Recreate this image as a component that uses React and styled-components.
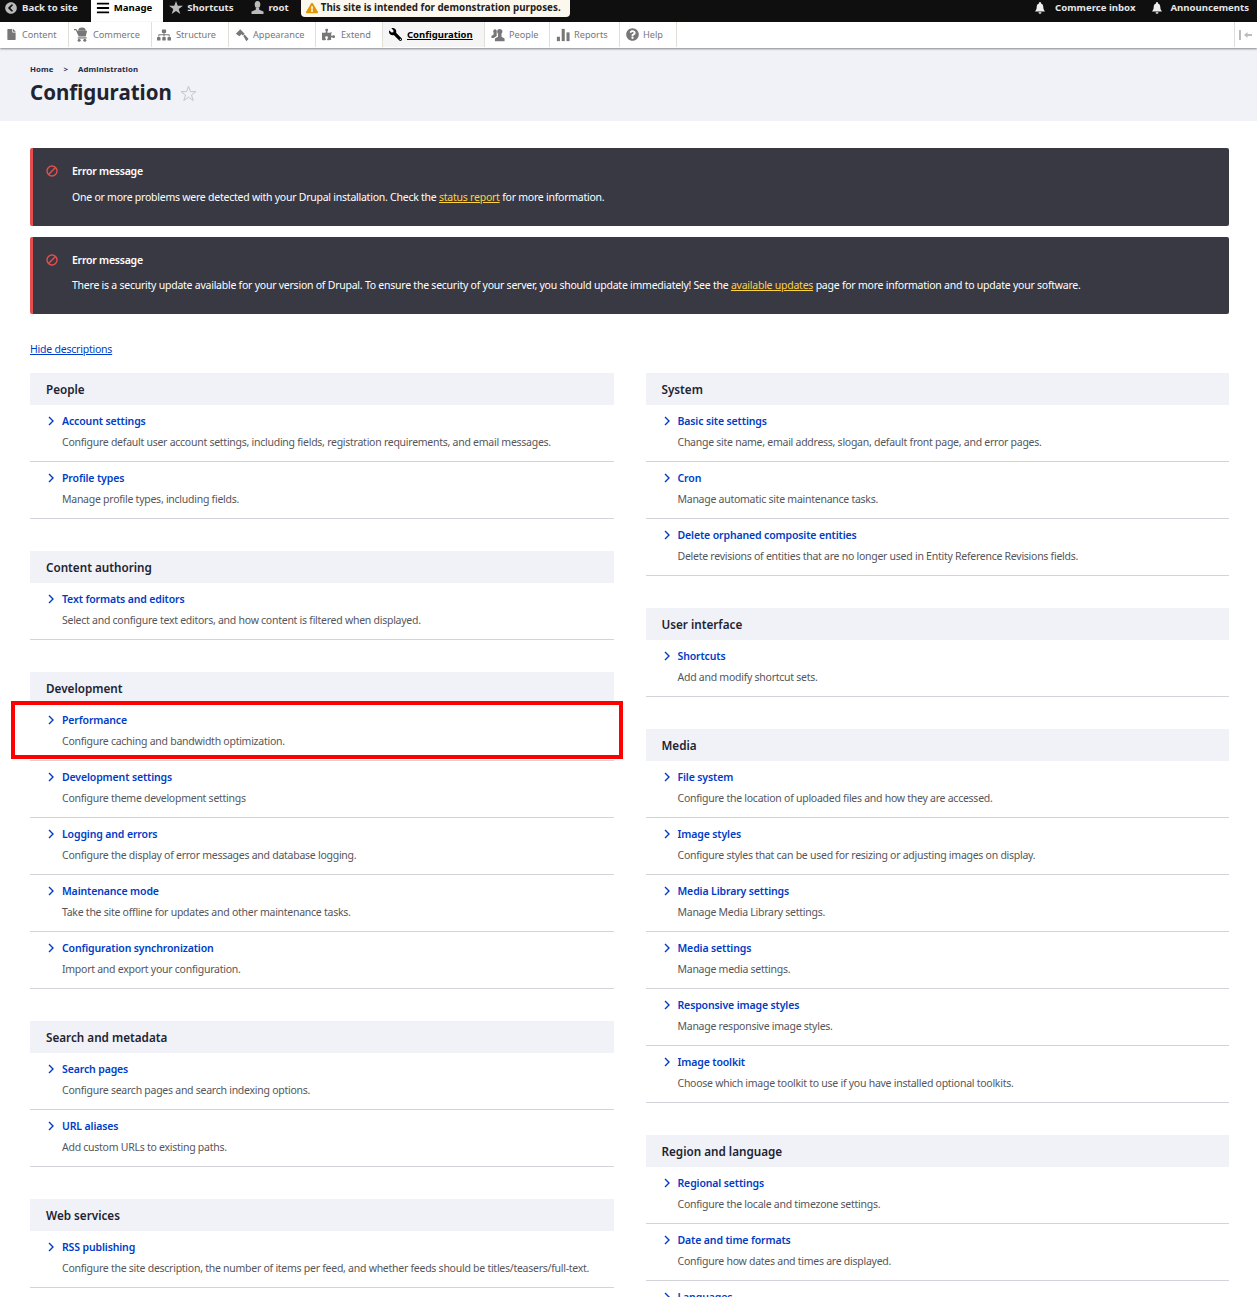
import React from 'react';
import styled, { createGlobalStyle } from 'styled-components';
import {
  FaChevronCircleLeft, FaBars, FaFile, FaSitemap,
  FaPuzzlePiece, FaWrench, FaQuestionCircle, FaExclamationTriangle
} from 'react-icons/fa';

const GlobalStyle = createGlobalStyle`
  html, body {
    margin: 0;
    padding: 0;
    background: #fff;
  }
  body {
    font-family: "Noto Sans", "Open Sans", sans-serif;
    font-size: 12px;
    color: #222330;
  }
  a { text-decoration: none; }
`;

const Page = styled.div`
  position: relative;
  width: 1257px;
  height: 1297px;
  overflow: hidden;
`;

const TopBar = styled.div`
  display: flex;
  align-items: flex-start;
  height: 22px;
  background: #0f0f0f;
  color: #eee;
  font-size: 9.6px;
  font-weight: 700;
`;
const TopItem = styled.a`
  display: flex;
  align-items: center;
  gap: ${p => p.$gap || 5}px;
  height: ${p => (p.$active ? 22 : 15)}px;
  padding: 0 ${p => p.$pad || 11}px ${p => (p.$active ? 7 : 0)}px ${p => p.$left || 6}px;
  box-sizing: border-box;
  color: ${p => (p.$active ? '#000' : '#e6e6e6')};
  background: ${p => (p.$active ? '#fff' : 'none')};
  svg { flex: none; }
`;
const DemoNotice = styled.div`
  display: flex;
  align-items: center;
  gap: 3px;
  width: 269px;
  height: 17px;
  box-sizing: border-box;
  padding: 0 0 2px 5px;
  border-radius: 0 0 4px 4px;
  background: #fdf8ed;
  color: #222;
  font-size: 9.8px;
`;
const Spacer = styled.div`
  flex: 1;
`;

const Tray = styled.div`
  display: flex;
  height: 26px;
  background: #fff;
  box-shadow: 0 1px 2px rgba(0, 0, 0, 0.45);
  position: relative;
`;
const TrayItem = styled.a`
  display: flex;
  align-items: center;
  gap: ${p => p.$gap}px;
  width: ${p => p.$w}px;
  height: 25px;
  box-sizing: border-box;
  padding-left: ${p => p.$left}px;
  border-right: 1px solid #e0e0d8;
  color: ${p => (p.$active ? '#000' : '#777')};
  background: ${p => (p.$active ? '#f5f5f5' : '#fff')};
  font-size: ${p => (p.$active ? 9.5 : 9.2)}px;
  font-weight: ${p => (p.$active ? 700 : 400)};
  text-decoration: ${p => (p.$active ? 'underline' : 'none')};
  svg { flex: none; }
`;
const TrayToggle = styled.div`
  display: flex;
  align-items: center;
  justify-content: center;
  width: 22px;
  height: 25px;
  margin-left: auto;
  border-left: 1px solid #ddd;
`;

const Header = styled.header`
  height: 73px;
  box-sizing: border-box;
  padding: 16px 30px 0;
  background: #f1f2f8;
`;
const Crumbs = styled.div`
  display: flex;
  gap: 10px;
  font-size: 7.8px;
  font-weight: 700;
  line-height: 11px;
  color: #222b45;
  letter-spacing: 0.1px;
`;
const TitleRow = styled.div`
  display: flex;
  align-items: center;
  gap: 8px;
  margin-top: 2px;
`;
const Title = styled.h1`
  margin: 0;
  font-size: 20.5px;
  line-height: 30px;
  font-weight: 700;
  color: #222330;
`;

const Main = styled.main`
  padding: 27px 28px 0 30px;
`;
const Message = styled.div`
  display: grid;
  grid-template-columns: 12px 1fr;
  column-gap: 14px;
  height: ${p => p.$h}px;
  box-sizing: border-box;
  margin-bottom: 11px;
  padding: 15px 12px 0 13px;
  border-left: 3px solid #e54e4e;
  border-radius: 2px;
  background: #393943;
  color: #fff;
  font-size: 10.5px;
  letter-spacing: -0.24px;
`;
const MessageTitle = styled.div`
  font-weight: 600;
  line-height: 16px;
`;
const MessageBody = styled.div`
  margin-top: ${p => p.$gap}px;
  line-height: 16px;
  a { color: #ffd23f; text-decoration: underline; }
`;
const HideLink = styled.a`
  display: block;
  margin-top: 27px;
  font-size: 10.5px;
  letter-spacing: -0.22px;
  line-height: 16px;
  color: #003cc5;
  text-decoration: underline;
`;

const Columns = styled.div`
  display: grid;
  grid-template-columns: 583.5px 583.5px;
  column-gap: 32px;
  margin-top: 16px;
`;
const Panel = styled.section`
  margin-bottom: 32px;
`;
const PanelTitle = styled.h3`
  margin: 0;
  height: 32px;
  padding-left: 16px;
  background: #f1f2f8;
  font-size: 11.7px;
  line-height: 33px;
  font-weight: 600;
  color: #222330;
`;
const Entry = styled.div`
  height: 57px;
  box-sizing: border-box;
  padding: 7px 0 0 16px;
  border-bottom: 1px solid #d3d4d9;
`;
const EntryLink = styled.a`
  display: flex;
  align-items: center;
  gap: 8px;
  font-size: 10.5px;
  letter-spacing: -0.13px;
  line-height: 18px;
  font-weight: 600;
  color: #003cc5;
`;
const Chevron = styled.svg`
  flex: none;
  width: 6px;
  height: 10px;
  margin-left: 2px;
`;
const EntryDesc = styled.div`
  margin: 3px 0 0 16px;
  font-size: 10.5px;
  letter-spacing: -0.26px;
  line-height: 18px;
  white-space: nowrap;
  color: #55565b;
`;
const Highlight = styled.div`
  position: absolute;
  left: 11px;
  top: 701px;
  width: 612px;
  height: 58px;
  box-sizing: border-box;
  border: 4px solid #f00;
  pointer-events: none;
`;

const left = [
  ['People', [
    ['Account settings', 'Configure default user account settings, including fields, registration requirements, and email messages.'],
    ['Profile types', 'Manage profile types, including fields.'],
  ]],
  ['Content authoring', [
    ['Text formats and editors', 'Select and configure text editors, and how content is filtered when displayed.'],
  ]],
  ['Development', [
    ['Performance', 'Configure caching and bandwidth optimization.'],
    ['Development settings', 'Configure theme development settings'],
    ['Logging and errors', 'Configure the display of error messages and database logging.'],
    ['Maintenance mode', 'Take the site offline for updates and other maintenance tasks.'],
    ['Configuration synchronization', 'Import and export your configuration.'],
  ]],
  ['Search and metadata', [
    ['Search pages', 'Configure search pages and search indexing options.'],
    ['URL aliases', 'Add custom URLs to existing paths.'],
  ]],
  ['Web services', [
    ['RSS publishing', 'Configure the site description, the number of items per feed, and whether feeds should be titles/teasers/full-text.'],
  ]],
];

const right = [
  ['System', [
    ['Basic site settings', 'Change site name, email address, slogan, default front page, and error pages.'],
    ['Cron', 'Manage automatic site maintenance tasks.'],
    ['Delete orphaned composite entities', 'Delete revisions of entities that are no longer used in Entity Reference Revisions fields.'],
  ]],
  ['User interface', [
    ['Shortcuts', 'Add and modify shortcut sets.'],
  ]],
  ['Media', [
    ['File system', 'Configure the location of uploaded files and how they are accessed.'],
    ['Image styles', 'Configure styles that can be used for resizing or adjusting images on display.'],
    ['Media Library settings', 'Manage Media Library settings.'],
    ['Media settings', 'Manage media settings.'],
    ['Responsive image styles', 'Manage responsive image styles.'],
    ['Image toolkit', 'Choose which image toolkit to use if you have installed optional toolkits.'],
  ]],
  ['Region and language', [
    ['Regional settings', 'Configure the locale and timezone settings.'],
    ['Date and time formats', 'Configure how dates and times are displayed.'],
    ['Languages', 'Configure languages for content and the user interface.'],
  ]],
];

// hand drawn where the icon packages have nothing close
const StarIcon = () => (
  <svg width="14" height="13" viewBox="0 0 14 13" fill="#bbb">
    <path d="M7 0l1.700 4.800H14L9.700 7.900l1.600 5L7 9.900l-4.300 3 1.600-5L0 4.800h5.300z" />
  </svg>
);
const UserIcon = () => (
  <svg width="13" height="13" viewBox="0 0 13 13" fill="#bbb">
    <ellipse cx="6.500" cy="3.500" rx="2.800" ry="3.500" />
    <path d="M4.800 7h3.400v1.800L12.500 10.500V13H.5v-2.500L4.800 8.800z" />
  </svg>
);
const BellIcon = () => (
  <svg width="10" height="12" viewBox="0 0 10 12" fill="#eee">
    <path d="M5 0a1 1 0 0 1 1 1v.4c1.600.5 2.300 1.900 2.300 3.600 0 2 .7 3.400 1.700 4.500H0C1 8.400 1.700 7 1.700 5c0-1.700.7-3.100 2.300-3.600V1a1 1 0 0 1 1-1z" />
    <path d="M3.500 10.300h3a1.500 1.500 0 0 1-3 0z" />
  </svg>
);
const CartIcon = () => (
  <svg width="15" height="15" viewBox="0 0 16 16" fill="#777">
    <path d="M0 2h2.500l1 2h10.500l-1.500 6H5L2 3.500H0z" />
    <path d="M4.500 4a4 3.500 0 0 1 8 0z" />
    <rect x="4" y="11" width="9.500" height="1.300" />
    <circle cx="5.500" cy="14" r="1.600" />
    <circle cx="11.500" cy="14" r="1.600" />
  </svg>
);
const BrushIcon = () => (
  <svg width="14" height="14" viewBox="0 0 16 16" fill="#777">
    <path d="M1 6.500 6 1.500l5 5-2 2L7.500 7 5 9.500z" />
    <path d="m9.500 9 1.500-1.500 4.500 5-2.500 2.500z" />
  </svg>
);
const PeopleIcon = () => (
  <svg width="14" height="14" viewBox="0 0 16 16" fill="#777">
    <circle cx="10" cy="4" r="3" />
    <path d="M8 6.500h4V10l3.500 2v3H4.500v-3L8 10z" />
    <path d="M4.500 1.500a2.500 2.500 0 0 1 2 1V7L6.500 9 3 11.500H.5V9L3 7.500V5.500A2.500 2.500 0 0 1 4.500 1.500z" />
  </svg>
);
const BarsIcon = () => (
  <svg width="14" height="14" viewBox="0 0 16 16" fill="#777">
    <rect x="1" y="10" width="3.500" height="5" />
    <rect x="6.500" y="1" width="3.500" height="14" />
    <rect x="12" y="5" width="3.500" height="10" />
  </svg>
);
const CollapseIcon = () => (
  <svg width="14" height="10" viewBox="0 0 14 10" fill="#bbb">
    <rect x="0" y="0" width="2" height="10" />
    <path d="M5 5 8.500 2v2H13v2H8.500v2z" />
  </svg>
);
const ErrorIcon = () => (
  <svg width="12" height="12" viewBox="0 0 12 12" fill="none" stroke="#e54e4e" strokeWidth="1.400" style={{ marginTop: 2 }}>
    <circle cx="6" cy="6" r="5" />
    <line x1="2.500" y1="9.500" x2="9.500" y2="2.500" />
  </svg>
);
const StarOutline = () => (
  <svg width="17" height="17" viewBox="0 0 17 17" fill="none" stroke="#c4c5cb" strokeWidth="1" style={{ marginTop: 2 }}>
    <path d="M8.500 1.200 10.400 6.600h5.500l-4.400 3.400 1.700 5.500-4.700-3.300-4.700 3.300 1.700-5.500L1.100 6.600h5.500z" />
  </svg>
);
const MirroredWrench = styled(FaWrench)`
  transform: scaleX(-1);
`;

// label, icon, cell width, icon padding, icon-text gap, active
const trayItems = [
  ['Content', <FaFile size={11} color="#777" />, 69, 6, 5],
  ['Commerce', <CartIcon />, 83, 5, 4],
  ['Structure', <FaSitemap size={14} color="#777" />, 77, 5, 5],
  ['Appearance', <BrushIcon />, 87, 6, 4],
  ['Extend', <FaPuzzlePiece size={13} color="#777" />, 67, 6, 6],
  ['Configuration', <MirroredWrench size={13} color="#000" />, 102, 6, 5, true],
  ['People', <PeopleIcon />, 65, 6, 4],
  ['Reports', <BarsIcon />, 70, 6, 4],
  ['Help', <FaQuestionCircle size={13} color="#777" />, 57, 6, 4],
];

function Section({ title, entries }) {
  return (
    <Panel>
      <PanelTitle>{title}</PanelTitle>
      {entries.map(([name, desc]) => (
        <Entry key={name}>
          <EntryLink href="#">
            <Chevron viewBox="0 0 6 10" fill="none" stroke="#003cc5" strokeWidth="1.400">
              <path d="M1 1l4 4-4 4" />
            </Chevron>
            {name}
          </EntryLink>
          <EntryDesc>{desc}</EntryDesc>
        </Entry>
      ))}
    </Panel>
  );
}

export default function App() {
  return (
    <Page>
      <GlobalStyle />
      <TopBar>
        <TopItem href="#" $left={5} $pad={13}><FaChevronCircleLeft size={12} color="#bbb" />Back to site</TopItem>
        <TopItem href="#" $active $left={5} $gap={4}><FaBars size={14} color="#000" />Manage</TopItem>
        <TopItem href="#" $gap={4} $pad={12}><StarIcon />Shortcuts</TopItem>
        <TopItem href="#" $gap={4} $pad={12}><UserIcon />root</TopItem>
        <DemoNotice>
          <FaExclamationTriangle size={12} color="#e29700" />
          This site is intended for demonstration purposes.
        </DemoNotice>
        <Spacer />
        <TopItem href="#" $gap={10} $left={5} $pad={9}><BellIcon />Commerce inbox</TopItem>
        <TopItem href="#" $gap={8} $left={8} $pad={8}><BellIcon />Announcements</TopItem>
      </TopBar>
      <Tray>
        {trayItems.map(([label, icon, w, pad, gap, active]) => (
          <TrayItem key={label} href="#" $w={w} $left={pad} $gap={gap} $active={active}>{icon}{label}</TrayItem>
        ))}
        <TrayToggle><CollapseIcon /></TrayToggle>
      </Tray>
      <Header>
        <Crumbs><span>Home</span><span>&gt;</span><span>Administration</span></Crumbs>
        <TitleRow>
          <Title>Configuration</Title>
          <StarOutline />
        </TitleRow>
      </Header>
      <Main>
        <Message $h={78}>
          <ErrorIcon />
          <div>
            <MessageTitle>Error message</MessageTitle>
            <MessageBody $gap={10}>
              One or more problems were detected with your Drupal installation. Check the <a href="#">status report</a> for more information.
            </MessageBody>
          </div>
        </Message>
        <Message $h={77}>
          <ErrorIcon />
          <div>
            <MessageTitle>Error message</MessageTitle>
            <MessageBody $gap={9}>
              There is a security update available for your version of Drupal. To ensure the security of your server, you should update immediately! See the <a href="#">available updates</a> page for more information and to update your software.
            </MessageBody>
          </div>
        </Message>
        <HideLink href="#">Hide descriptions</HideLink>
        <Columns>
          <div>{left.map(([t, e]) => <Section key={t} title={t} entries={e} />)}</div>
          <div>{right.map(([t, e]) => <Section key={t} title={t} entries={e} />)}</div>
        </Columns>
      </Main>
      <Highlight />
    </Page>
  );
}
